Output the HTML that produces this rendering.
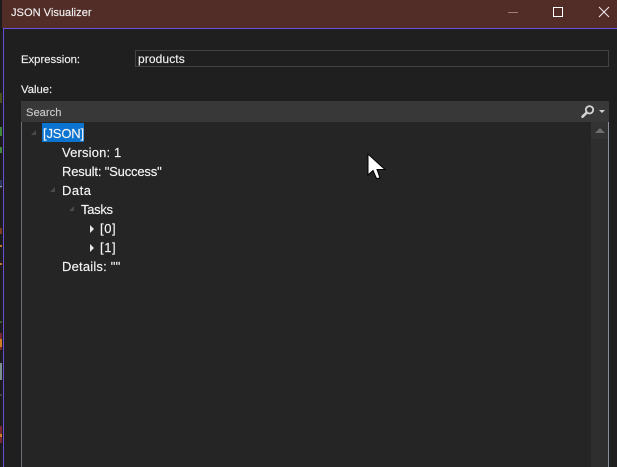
<!DOCTYPE html>
<html><head><meta charset="utf-8"><style>
html,body{margin:0;padding:0;background:#1e1e1e}
#r{position:relative;width:617px;height:467px;overflow:hidden;background:#1f1f1f;font-family:"Liberation Sans",sans-serif;font-size:12px;color:#f1f1f1}
#r div{position:absolute}
.t{white-space:nowrap;line-height:16px;height:16px;-webkit-text-stroke:.15px currentColor}
.n{font-size:13px;color:#f4f4f4}
.l{font-size:11.3px}
.s{left:0;width:2px}
.tri{width:0;height:0}
</style></head><body><div id="r">
<div style="left:0;top:0;width:3px;height:467px;background:#1c1c1c"></div>
<div class="s" style="top:93px;height:10px;background:#4a4f1e"></div>
<div class="s" style="top:127px;height:9px;background:#3f8a3c"></div>
<div class="s" style="top:147px;height:6px;background:#3f8a3c"></div>
<div class="s" style="top:180px;height:8px;background:#2d3a66"></div>
<div class="s" style="top:186px;height:1px;background:#b09a80"></div>
<div class="s" style="top:228px;height:6px;background:#7a3d1e"></div>
<div class="s" style="top:245px;height:2px;background:#c07a30"></div>
<div class="s" style="top:263px;height:2px;background:#c07a30"></div>
<div class="s" style="top:321px;height:2px;background:#3a5a20"></div>
<div class="s" style="top:333px;height:17px;background:#7a2a30"></div>
<div class="s" style="top:339px;height:8px;background:#d08020"></div>
<div class="s" style="top:363px;height:17px;background:#7d9090"></div>
<div class="s" style="top:394px;height:2px;background:#444"></div>
<div class="s" style="top:426px;height:17px;background:#7a2a30"></div>
<div class="s" style="top:434px;height:3px;background:#d08020"></div>

<div style="left:2px;top:0;width:615px;height:28px;background:#522c27"></div>
<div style="left:3px;top:28px;width:614px;height:1px;background:#6a50e0"></div>
<div style="left:3px;top:29px;width:1px;height:438px;background:#6a50d0"></div>
<div class="t" style="left:11px;top:5px;font-size:11.1px">JSON Visualizer</div>

<div style="left:508px;top:12px;width:10px;height:1px;background:#9a7f7a"></div>
<div style="left:553px;top:7px;width:8px;height:8px;border:1px solid #fff"></div>
<svg style="position:absolute;left:598px;top:6px" width="12" height="12" viewBox="0 0 12 12"><path d="M1 1L11 11M11 1L1 11" stroke="#f2eeee" stroke-width="1" fill="none"/></svg>

<div class="t l" style="left:21px;top:52px">Expression:</div>
<div style="left:135px;top:50px;width:472px;height:15px;border:1px solid #434343;background:#1f1f1f"></div>
<div class="t" style="left:138px;top:51px;letter-spacing:.1px">products</div>
<div class="t l" style="left:21px;top:82px">Value:</div>

<div style="left:21px;top:101px;width:588px;height:21px;background:#383838"></div>
<div class="t" style="left:26px;top:105px;color:#c8c8c8;font-size:11.2px">Search</div>
<svg style="position:absolute;left:580px;top:104px" width="16" height="15" viewBox="0 0 16 15"><circle cx="9.500" cy="5.800" r="3.700" fill="none" stroke="#d4d4d4" stroke-width="1.800"/><path d="M6.800 8.500L2.500 12.700" stroke="#d4d4d4" stroke-width="2.600" stroke-linecap="round"/></svg>
<div class="tri" style="left:599px;top:110px;border-left:3px solid transparent;border-right:3px solid transparent;border-top:3px solid #d0d0d0"></div>

<div style="left:21px;top:122px;width:1px;height:345px;background:#6e6e76"></div>
<div style="left:22px;top:122px;width:569px;height:345px;background:#252525"></div>
<div style="left:591px;top:122px;width:17px;height:345px;background:#2e2e2e"></div>
<div style="left:591px;top:122px;width:17px;height:17px;background:#333"></div>
<div class="tri" style="left:595px;top:128px;border-left:5px solid transparent;border-right:5px solid transparent;border-bottom:5px solid #6e6e6e"></div>
<div style="left:608px;top:122px;width:1px;height:345px;background:#8a8f9c"></div>

<div style="left:42px;top:123px;width:42px;height:19px;background:#0a74d0"></div>
<div class="t n" style="left:43px;top:126px;letter-spacing:-.15px">[JSON]</div>
<div class="t n" style="left:62px;top:145px;letter-spacing:.16px">Version: 1</div>
<div class="t n" style="left:62px;top:164px;letter-spacing:-.17px">Result: "Success"</div>
<div class="t n" style="left:62px;top:183px;letter-spacing:.5px">Data</div>
<div class="t n" style="left:81px;top:202px;letter-spacing:-.3px">Tasks</div>
<div class="t n" style="left:100px;top:221px;letter-spacing:.6px">[0]</div>
<div class="t n" style="left:100px;top:240px;letter-spacing:.6px">[1]</div>
<div class="t n" style="left:62px;top:259px;letter-spacing:.2px">Details: ""</div>

<svg style="position:absolute;left:0;top:0" width="617" height="467"><g fill="#4a4a4a"><path d="M36 135L31 135L36 130Z"/><path d="M55 192L50 192L55 187Z"/><path d="M74 211L69 211L74 206Z"/></g><g fill="#e8e8e8"><path d="M90 225L94 229L90 233Z"/><path d="M90 244L94 248L90 252Z"/></g>
<path d="M368 154L368 175L373 170.500L376.500 178.500L380 178L377 169.500L385 169.500Z" fill="#fff" stroke="#000" stroke-width="1"/></svg>
</div></body></html>
